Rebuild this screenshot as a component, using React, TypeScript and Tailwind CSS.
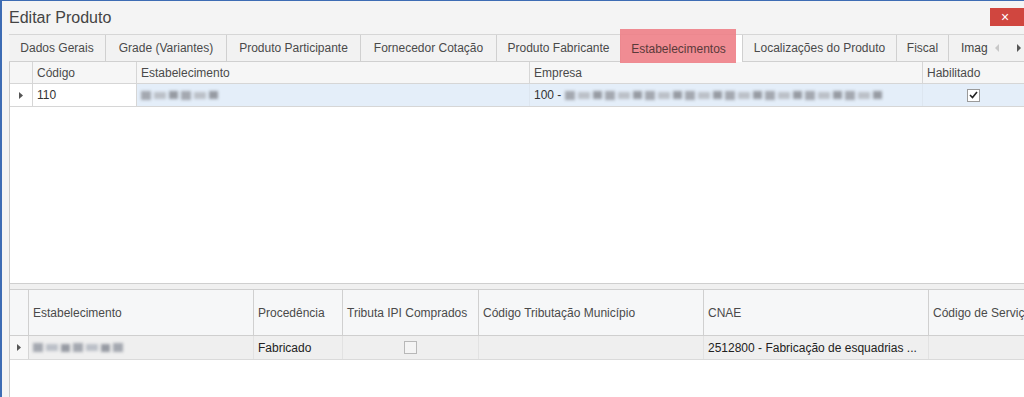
import React from "react";

const font = { fontFamily: '"Liberation Sans", Arial, sans-serif' };

function Blur({ w, className = "" }: { w: number; className?: string }) {
  return (
    <div className={"flex items-center gap-[3px] blur-[1.5px] " + className}>
      {Array.from({ length: Math.max(1, Math.round(w / 14)) }).map((_, i) => (
        <div
          key={i}
          className={i % 3 === 0 ? "h-[9px] w-[10px] bg-[#a4a8b0]" : i % 3 === 1 ? "h-[7px] w-[12px] bg-[#bcc0c8]" : "h-[8px] w-[9px] bg-[#979ba3]"}
        />
      ))}
    </div>
  );
}

const tabs: { label: string; w: number; active?: boolean }[] = [
  { label: "Dados Gerais", w: 97 },
  { label: "Grade (Variantes)", w: 121 },
  { label: "Produto Participante", w: 134 },
  { label: "Fornecedor Cotação", w: 136 },
  { label: "Produto Fabricante", w: 124 },
  { label: "Estabelecimentos", w: 122, active: true },
  { label: "Localizações do Produto", w: 154 },
  { label: "Fiscal", w: 52 },
];

export default function App() {
  return (
    <div
      style={font}
      className="w-[1024px] h-[397px] overflow-hidden bg-[#f4f4f4] border-t border-l-2 border-[#3d6cb4] flex flex-col text-[12px] text-[#444]"
    >
      {/* title bar */}
      <div className="h-[33px] flex items-start justify-between pl-[7px] shrink-0">
        <span className="text-[16px] text-[#444] mt-[8px] leading-[18px]">Editar Produto</span>
        <div className="w-[34px] h-[18px] mt-[7px] bg-[#d0463f] flex items-center justify-center text-white text-[14px] leading-none pr-[4px]">
          ×
        </div>
      </div>

      {/* tabs */}
      <div className="h-[28px] flex items-stretch ml-[7px] shrink-0 relative border-t border-[#d6d6d6]">
        {tabs.map((t) => (
          <div
            key={t.label}
            style={{ width: t.w }}
            className={
              "shrink-0 flex items-center justify-center border-r border-[#d0d0d0] relative " +
              (t.active ? "bg-white" : "bg-[#f2f2f2] border-b border-b-[#d0d0d0]")
            }
          >
            {t.active && (
              <div className="absolute left-[-1px] top-[-6px] w-[116px] h-[34px] bg-[#ee8087]/90" />
            )}
            <span className={"relative whitespace-nowrap " + (t.active ? "text-[#5a3a3a] -ml-[6px]" : "text-[#4a4a4a]")}>{t.label}</span>
          </div>
        ))}
        <div className="flex-1 flex items-center bg-[#f2f2f2] border-b border-[#d0d0d0] overflow-hidden relative">
          <span className="ml-[12px] whitespace-nowrap">Imag</span>
          <div className="absolute right-0 top-0 bottom-0 w-[34px] bg-[#f2f2f2] flex items-center justify-between pl-[5px] pr-[2px]">
            <svg width="5" height="8" viewBox="0 0 5 8"><path d="M4 0 L0 4 L4 8Z" fill="#c8c8c8" /></svg>
            <svg width="5" height="8" viewBox="0 0 5 8"><path d="M0 0 L4 4 L0 8Z" fill="#555" /></svg>
          </div>
        </div>
      </div>

      {/* content */}
      <div className="flex-1 flex flex-col ml-[7px] border-l border-[#c9c9c9] bg-white min-h-0">
        {/* grid 1 */}
        <div className="h-[222px] flex flex-col border-b border-[#cfcfcf] shrink-0">
          <div className="h-[22px] flex bg-[#f6f6f6] border-b border-[#d6d6d6] text-[#4a4a4a]">
            <div className="w-[23px] shrink-0 border-r border-[#d6d6d6]" />
            <div className="w-[104px] shrink-0 border-r border-[#d6d6d6] flex items-center pl-[4px]">Código</div>
            <div className="w-[393px] shrink-0 border-r border-[#d6d6d6] flex items-center pl-[4px]">Estabelecimento</div>
            <div className="w-[393px] shrink-0 border-r border-[#d6d6d6] flex items-center pl-[4px]">Empresa</div>
            <div className="flex-1 flex items-center pl-[4px]">Habilitado</div>
          </div>
          <div className="h-[23px] flex border-b border-[#d6d6d6] text-[#333]">
            <div className="w-[23px] shrink-0 border-r border-[#d6d6d6] flex items-center justify-center">
              <svg width="4" height="7" viewBox="0 0 4 7"><path d="M0 0 L4 3.5 L0 7Z" fill="#555" /></svg>
            </div>
            <div className="w-[104px] shrink-0 border-r border-[#d6d6d6] flex items-center pl-[4px] bg-white">110</div>
            <div className="w-[393px] shrink-0 border-r border-[#dde6f0] flex items-center pl-[4px] bg-[#e4eef9]">
              <Blur w={80} />
            </div>
            <div className="w-[393px] shrink-0 border-r border-[#dde6f0] flex items-center pl-[4px] bg-[#e4eef9] gap-[4px]">
              <span>100 -</span>
              <Blur w={330} />
            </div>
            <div className="flex-1 flex items-center justify-center bg-[#e4eef9]">
              <div className="w-[13px] h-[13px] border border-[#9a9a9a] bg-white flex items-center justify-center">
                <svg width="9" height="8" viewBox="0 0 9 8"><path d="M1 4 L3.5 6.5 L8 1" stroke="#222" strokeWidth="1.6" fill="none" /></svg>
              </div>
            </div>
          </div>
        </div>

        {/* splitter */}
        <div className="h-[6px] bg-[#f0f0f0] border-b border-[#cfcfcf] shrink-0" />

        {/* grid 2 */}
        <div className="flex-1 flex flex-col">
          <div className="h-[46px] flex bg-[#f6f7f8] border-b border-[#cfcfcf] text-[#4a4a4a] shrink-0">
            <div className="w-[19px] shrink-0 border-r border-[#d0d0d0]" />
            <div className="w-[225px] shrink-0 border-r border-[#d0d0d0] flex items-center pl-[4px]">Estabelecimento</div>
            <div className="w-[89px] shrink-0 border-r border-[#d0d0d0] flex items-center pl-[4px]">Procedência</div>
            <div className="w-[136px] shrink-0 border-r border-[#d0d0d0] flex items-center pl-[4px]">Tributa IPI Comprados</div>
            <div className="w-[225px] shrink-0 border-r border-[#d0d0d0] flex items-center pl-[4px]">Código Tributação Município</div>
            <div className="w-[225px] shrink-0 border-r border-[#d0d0d0] flex items-center pl-[4px]">CNAE</div>
            <div className="flex-1 flex items-center pl-[4px] whitespace-nowrap overflow-hidden">Código de Serviço</div>
          </div>
          <div className="h-[24px] flex bg-[#efefef] border-b border-[#dadada] text-[#222] shrink-0">
            <div className="w-[19px] shrink-0 border-r border-[#d6d6d6] flex items-center justify-center bg-[#f7f7f7]">
              <svg width="4" height="7" viewBox="0 0 4 7"><path d="M0 0 L4 3.5 L0 7Z" fill="#555" /></svg>
            </div>
            <div className="w-[225px] shrink-0 border-r border-[#e2e2e2] flex items-center pl-[4px]">
              <Blur w={100} />
            </div>
            <div className="w-[89px] shrink-0 border-r border-[#e2e2e2] flex items-center pl-[4px]">Fabricado</div>
            <div className="w-[136px] shrink-0 border-r border-[#e2e2e2] flex items-center justify-center">
              <div className="w-[13px] h-[13px] border border-[#b8b8b8] bg-[#f4f4f4]" />
            </div>
            <div className="w-[225px] shrink-0 border-r border-[#e2e2e2]" />
            <div className="w-[225px] shrink-0 border-r border-[#e2e2e2] flex items-center pl-[4px] whitespace-nowrap">
              2512800 - Fabricação de esquadrias ...
            </div>
            <div className="flex-1" />
          </div>
        </div>
      </div>
    </div>
  );
}
